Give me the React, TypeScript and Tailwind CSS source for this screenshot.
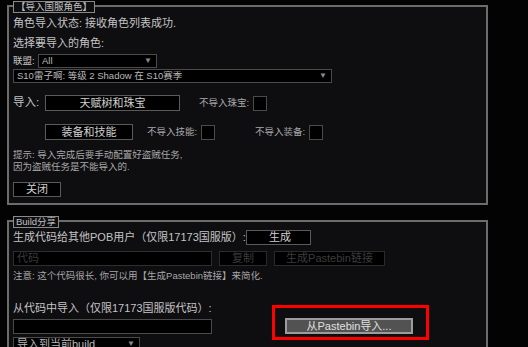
import React from 'react';

const Btn = ({
  label,
  className = '',
  dim = false
}: {
  label: string;
  className?: string;
  dim?: boolean;
}) => <div className={`flex items-center justify-center bg-black border ${dim ? 'border-[#2a2a2a] text-[#3c3c3c]' : 'border-[#5a5a5a] text-[#d0d0d0]'} text-[11px] ${className}`}>
    {label}
  </div>;

const Check = () => <div className="w-[14px] h-[15px] bg-black border border-[#4a4a4a]" />;

const Select = ({ label, className = '' }: { label: string; className?: string }) => <div className={`flex items-center justify-between bg-black border border-[#4a4a4a] pl-[3px] pr-[4px] text-[9.5px] text-[#b8b8b8] ${className}`}>
    <span className="leading-none">{label}</span>
    <span className="text-[8px] text-[#8a8a8a] leading-none">▼</span>
  </div>;

const Panel = ({
  title,
  className = '',
  children
}: {
  title: string;
  className?: string;
  children: React.ReactNode;
}) => <div className={`relative w-[481px] border-2 border-[#6c6c6c] bg-[#0e0d10] pl-[4px] ${className}`}>
    <div className="absolute left-[4px] top-[-6px] h-[12px] px-[2px] flex items-center bg-[#0e0d10] border border-[#8a8a8a] text-[9.5px] leading-none text-[#c0c0c0]">
      {title}
    </div>
    {children}
  </div>;

export default function App() {
  return <div className="w-[528px] h-[347px] overflow-hidden bg-[#030303] pl-[7px] pt-[5px] font-['Liberation_Sans','Noto_Sans_CJK_SC',sans-serif] text-[#c4c4c4]">
      <Panel title="【导入国服角色】" className="h-[200px]">
        <div className="mt-[9px] h-[14px] text-[11px] leading-[14px]">角色导入状态: 接收角色列表成功.</div>
        <div className="mt-[6px] h-[14px] text-[11px] leading-[14px]">选择要导入的角色:</div>
        <div className="mt-[4px] flex items-center h-[14px]">
          <span className="text-[9.5px] w-[25px]">联盟:</span>
          <Select label="All" className="w-[119px] h-[14px]" />
        </div>
        <Select label="S10雷子啊: 等级 2 Shadow 在 S10赛季" className="mt-[1px] w-[319px] h-[14px]" />
        <div className="mt-[12px] flex items-center h-[16px]">
          <span className="text-[11.5px] w-[32px]">导入:</span>
          <Btn label="天赋树和珠宝" className="w-[135px] h-[16px]" />
          <span className="ml-[19px] text-[9.5px] text-[#a8a8a8] w-[54px]">不导入珠宝:</span>
          <Check />
        </div>
        <div className="mt-[13px] flex items-center h-[16px]">
          <Btn label="装备和技能" className="ml-[32px] w-[88px] h-[16px]" />
          <span className="ml-[14px] text-[9.5px] text-[#a8a8a8] w-[54px]">不导入技能:</span>
          <Check />
          <span className="ml-[40px] text-[9.5px] text-[#a8a8a8] w-[54px]">不导入装备:</span>
          <Check />
        </div>
        <div className="mt-[9px] text-[9.5px] leading-[12px] text-[#a8a8a8]">
          <div>提示: 导入完成后要手动配置好盗贼任务,</div>
          <div>因为盗贼任务是不能导入的.</div>
        </div>
        <Btn label="关闭" className="mt-[9px] w-[48px] h-[15px]" />
      </Panel>

      <Panel title="Build分享" className="mt-[15px] h-[200px]">
        <div className="mt-[8px] flex items-center h-[15px]">
          <span className="text-[11px] w-[233px] whitespace-nowrap">生成代码给其他POB用户（仅限17173国服版）:</span>
          <div className="flex items-center bg-black border border-[#5a5a5a] w-[65px] h-[15px] pl-[22px] text-[11px] text-[#d0d0d0]">生成</div>
        </div>
        <div className="mt-[6px] flex items-center h-[15px] gap-[7px]">
          <div className="w-[199px] h-[15px] bg-black border border-[#2e2e2e] pl-[3px] text-[11px] leading-[13px] text-[#3a3a3a]">代码</div>
          <Btn label="复制" dim className="w-[48px] h-[15px]" />
          <Btn label="生成Pastebin链接" dim className="w-[111px] h-[15px]" />
        </div>
        <div className="mt-[4px] text-[9.5px] leading-[12px] text-[#a8a8a8]">注意: 这个代码很长, 你可以用【生成Pastebin链接】来简化.</div>
        <div className="mt-[19px] h-[14px] text-[11px] leading-[14px]">从代码中导入（仅限17173国服版代码）:</div>
        <div className="mt-[3px] flex items-center h-[16px]">
          <div className="w-[199px] h-[15px] bg-black border border-[#4a4a4a]" />
          <div className="relative ml-[73px]">
            <div className="w-[128px] h-[16px] flex items-center justify-center bg-[#525252] border-2 border-[#9c9c9c] text-[11px] text-[#e0e0e0]">从Pastebin导入...</div>
            <div className="absolute left-[-13px] right-[-16px] top-[-13px] bottom-[-6px] border-[3px] border-[#ff0000]" />
          </div>
        </div>
        <Select label="导入到当前build" className="mt-[3px] w-[127px] h-[14px] text-[11px]" />
      </Panel>
    </div>;
}
